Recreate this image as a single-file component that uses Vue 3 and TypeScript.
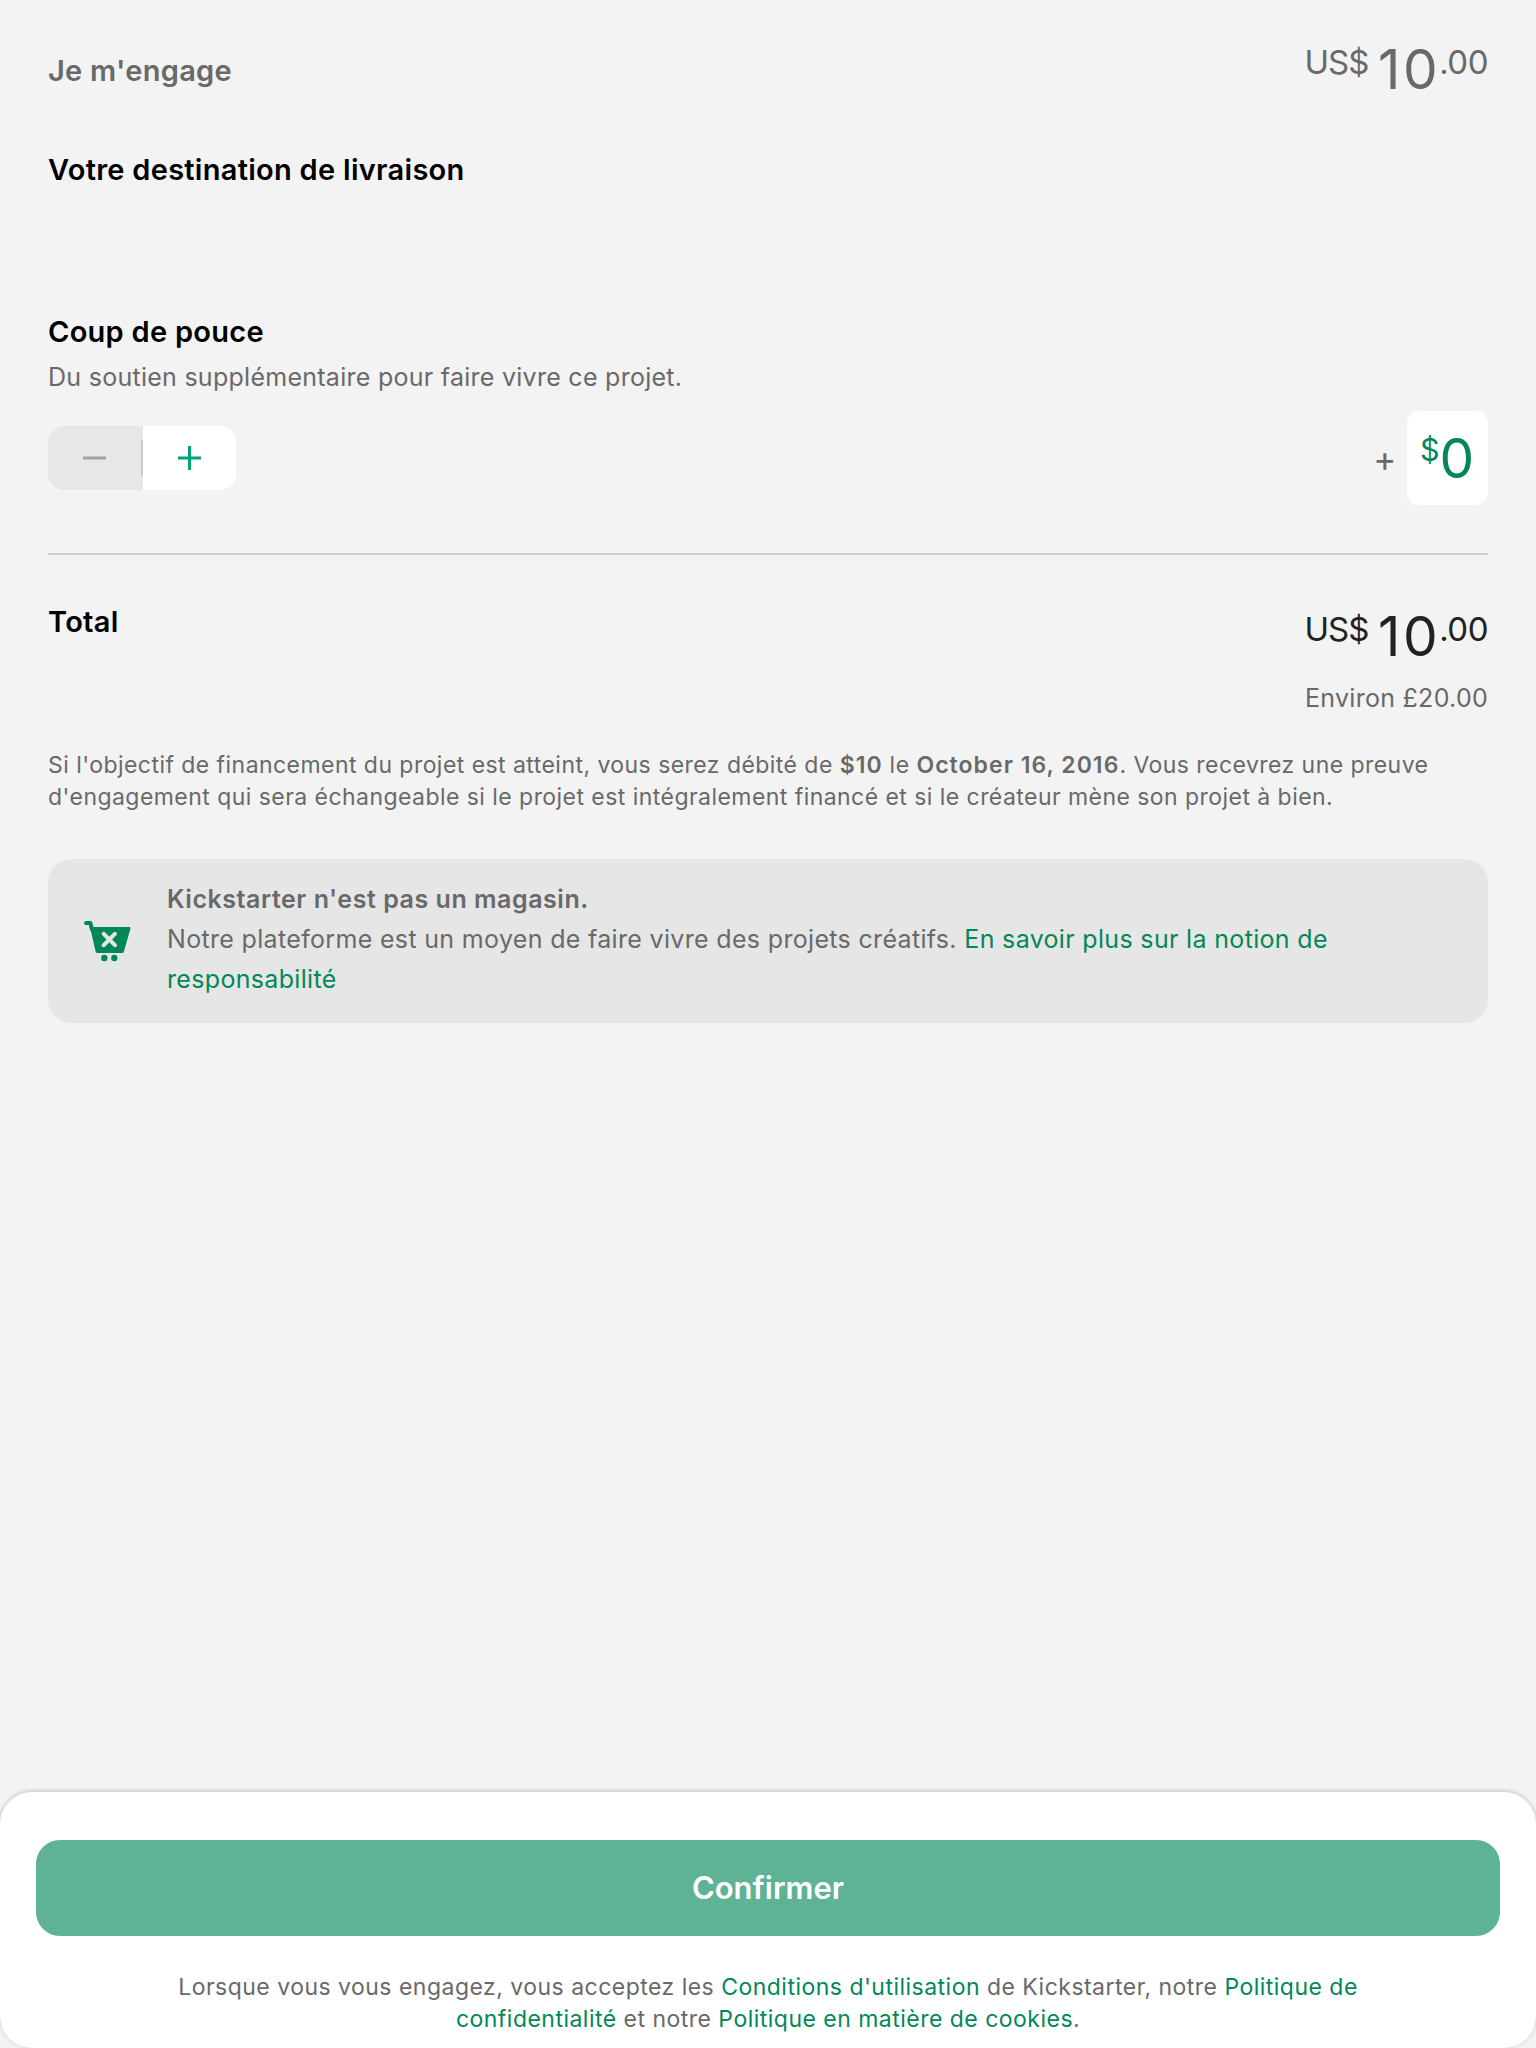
<script setup lang="ts">
interface Price {
  currency: string
  amount: string
  cents: string
}

const pledge: Price = { currency: 'US$', amount: '10', cents: '.00' }
const total: Price = { currency: 'US$', amount: '10', cents: '.00' }
</script>

<template>
  <div class="page">
    <main class="content">
      <section class="row pledge">
        <h2 class="title muted">Je m'engage</h2>
        <div class="price muted">
          <span class="currency">{{ pledge.currency }}</span>
          <span class="amount">{{ pledge.amount }}</span>
          <span class="cents">{{ pledge.cents }}</span>
        </div>
      </section>

      <h2 class="title shipping">Votre destination de livraison</h2>

      <h2 class="title bonus">Coup de pouce</h2>
      <p class="hint">Du soutien supplémentaire pour faire vivre ce projet.</p>

      <section class="row support">
        <div class="stepper">
          <button class="step minus" aria-label="-">
            <svg width="23" height="24" viewBox="0 0 23 24"><path d="M0 12h23" stroke="#9fa3a1" stroke-width="3" /></svg>
          </button>
          <button class="step plus" aria-label="+">
            <svg width="23" height="24" viewBox="0 0 23 24"><path d="M0 12h23M11.5 0v24" stroke="#03a27b" stroke-width="3" /></svg>
          </button>
        </div>
        <div class="extra">
          <span class="sign">+</span>
          <div class="field"><span class="dollar">$</span><span class="zero">0</span></div>
        </div>
      </section>

      <hr class="divider" />

      <section class="row total">
        <h2 class="title">Total</h2>
        <div class="price">
          <span class="currency">{{ total.currency }}</span>
          <span class="amount">{{ total.amount }}</span>
          <span class="cents">{{ total.cents }}</span>
        </div>
      </section>
      <p class="approx">Environ £20.00</p>

      <p class="notice">
        Si l'objectif de financement du projet est atteint, vous serez débité de <b>$10</b> le <b>October 16, 2016</b>. Vous recevrez une preuve<br>
        d'engagement qui sera échangeable si le projet est intégralement financé et si le créateur mène son projet à bien.
      </p>

      <aside class="card">
        <svg class="cart" width="48" height="42" viewBox="0 0 48 42">
          <path d="M2 3h4.300l1.700 6.500" fill="none" stroke="#028858" stroke-width="4" stroke-linecap="round" stroke-linejoin="round" />
          <path d="M6 7h39.300q1.600 0 1.200 1.600l-6.600 22.800q-.4 1.600-2 1.600H13.500q-1.600 0-1.900-1.600z" fill="#028858" />
          <path d="M19.700 13.800l11.200 11.400M30.900 13.800l-11.200 11.400" stroke="#e6e6e6" stroke-width="4" stroke-linecap="round" />
          <circle cx="20.300" cy="38" r="3.200" fill="#028858" />
          <circle cx="30.300" cy="38" r="3.200" fill="#028858" />
        </svg>
        <p class="card-text">
          <b>Kickstarter n'est pas un magasin.</b><br>
          Notre plateforme est un moyen de faire vivre des projets créatifs. <a>En savoir plus sur la notion de<br>
          responsabilité</a>
        </p>
      </aside>
    </main>

    <footer class="sheet">
      <button class="confirm">Confirmer</button>
      <p class="legal">
        Lorsque vous vous engagez, vous acceptez les <a>Conditions d'utilisation</a> de Kickstarter, notre <a>Politique de<br>
        confidentialité</a> et notre <a>Politique en matière de cookies</a>.
      </p>
    </footer>
  </div>
</template>

<style>
body {
  margin: 0;
  background: #f3f3f3;
}
</style>

<style scoped>
.page {
  width: 1536px;
  height: 2048px;
  display: flex;
  flex-direction: column;
  justify-content: space-between;
  background: #f3f3f3;
  color: #696969;
  font-family: Inter, 'Liberation Sans', sans-serif;
  overflow: hidden;
  white-space: nowrap;
}
.content {
  padding: 39px 48px 0;
}
h2,
p {
  margin: 0;
}
b {
  font-weight: 600;
}
a {
  color: #028858;
}
.row {
  display: flex;
  justify-content: space-between;
  align-items: flex-start;
}
.title {
  font-size: 29px;
  line-height: 40px;
  font-weight: 600;
  letter-spacing: 0.28px;
  color: #000;
}
.pledge {
  height: 60px;
}
.pledge .title {
  padding-top: 12px;
}
.title.muted,
.price.muted {
  color: #696969;
}
.price {
  display: flex;
  color: #222;
}
.currency,
.cents {
  font-size: 33px;
  line-height: 40px;
  padding-top: 3px;
}
.currency {
  letter-spacing: -1px;
}
.cents {
  letter-spacing: -0.5px;
}
.amount {
  font-size: 55px;
  line-height: 60px;
  letter-spacing: 2.5px;
  margin: 0 -1px 0 9.7px;
}
.shipping {
  margin-top: 51px;
}
.bonus {
  margin-top: 122px;
}
.hint {
  margin-top: 9px;
  font-size: 25px;
  line-height: 32px;
  letter-spacing: 0.27px;
}
.support {
  margin-top: 18px;
  height: 94px;
  align-items: center;
}
.stepper {
  display: flex;
  width: 188px;
  height: 64px;
  border-radius: 16px;
  overflow: hidden;
  background: #fff;
}
.step {
  border: 0;
  padding: 0;
  display: flex;
  align-items: center;
  justify-content: center;
  background: none;
}
.minus {
  width: 95px;
  padding-right: 2px;
  background: linear-gradient(#cbcbcb, #cbcbcb) 93px 14px / 2px 36px no-repeat #e7e7e7;
}
.plus {
  width: 93px;
}
.extra {
  display: flex;
  align-items: center;
}
.sign {
  font-size: 35px;
  line-height: 40px;
  margin-right: 10.5px;
}
.field {
  display: flex;
  box-sizing: border-box;
  width: 81px;
  height: 94px;
  border-radius: 12px;
  background: #fff;
  color: #028858;
  padding: 17px 0 0 13px;
}
.dollar {
  font-size: 30.5px;
  line-height: 40px;
  padding-top: 2px;
}
.zero {
  font-size: 55px;
  line-height: 60px;
}
.divider {
  margin: 48px 0 0;
  border: 0;
  height: 2px;
  background: #cfcfcf;
}
.total {
  margin-top: 47px;
  height: 64px;
}
.total .price {
  padding-top: 4px;
}
.approx {
  margin-top: 16px;
  text-align: right;
  font-size: 25px;
  line-height: 32px;
  letter-spacing: 0.28px;
}
.notice {
  margin-top: 35px;
  font-size: 23px;
  line-height: 32px;
  letter-spacing: 0.45px;
}
.notice b {
  letter-spacing: 1.05px;
}
.card {
  margin-top: 46px;
  box-sizing: border-box;
  height: 164px;
  border-radius: 24px;
  background: #e6e6e6;
  display: flex;
  align-items: center;
  padding: 20px 24px 24px 36px;
}
.cart {
  flex: none;
  margin: 4px 35px 0 0;
}
.card-text {
  font-size: 25px;
  line-height: 40px;
  letter-spacing: 0.33px;
}
.card-text b {
  letter-spacing: 0.54px;
}
.sheet {
  box-sizing: border-box;
  height: 256px;
  padding: 48px 36px 0;
  border-radius: 32px;
  background: #fff;
  box-shadow: 0 -1px 5px rgba(0, 0, 0, 0.2);
}
.confirm {
  display: block;
  width: 100%;
  height: 96px;
  border: 0;
  padding: 0 0 2px;
  border-radius: 24px;
  background: #5fb395;
  color: #fff;
  font-family: inherit;
  font-size: 31px;
  font-weight: 600;
}
.legal {
  margin-top: 35px;
  text-align: center;
  font-size: 23px;
  line-height: 32px;
  letter-spacing: 0.48px;
}
</style>
